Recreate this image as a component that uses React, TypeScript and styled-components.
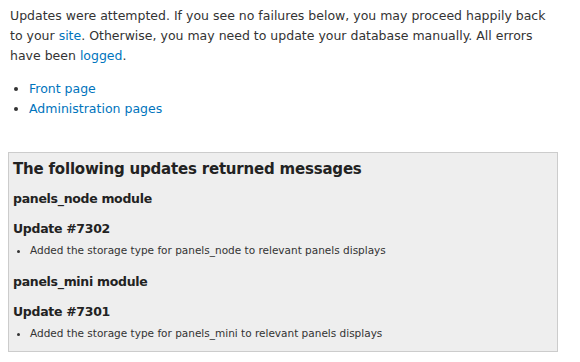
import React from "react";
import styled, { createGlobalStyle } from "styled-components";

const Global = createGlobalStyle`
  html, body { margin: 0; padding: 0; background: #fff; }
  body { font-family: "DejaVu Sans", Verdana, sans-serif; color: #333; }
`;

const Page = styled.div`
  padding: 6px 22px 0 8px;
  width: 580px;
  box-sizing: border-box;
`;

const Intro = styled.p`
  margin: 0 0 13px 2px;
  font-size: 12.5px;
  line-height: 20px;
`;

const Link = styled.a`
  color: #0074bd;
  text-decoration: none;
`;

const Nav = styled.ul`
  margin: 0 0 33px 0;
  padding: 0 0 0 21px;
  font-size: 12.5px;
  line-height: 20px;
  list-style: disc;
`;

const Box = styled.div`
  border: 1px solid #ccc;
  background: #eee;
  padding: 5px 4px 10px 4px;
  height: 200px;
  box-sizing: border-box;
`;

const Title = styled.h2`
  margin: 0;
  font-size: 15px;
  letter-spacing: -0.2px;
  font-weight: bold;
  line-height: 22px;
  padding-bottom: 9px;
  color: #222;
`;

const Module = styled.h3<{ $gap?: number }>`
  margin: 0;
  font-size: 12.5px;
  letter-spacing: -0.3px;
  font-weight: bold;
  line-height: 20px;
  padding-bottom: ${(p) => p.$gap ?? 10}px;
  color: #222;
`;

const Messages = styled.ul`
  margin: 0 0 15px 0;
  padding: 0 0 0 17px;
  font-size: 10.5px;
  line-height: 14px;
  list-style: disc;
`;

export default function App() {
  return (
    <>
      <Global />
      <Page>
        <Intro>
          Updates were attempted. If you see no failures below, you may proceed happily back to your{" "}
          <Link href="#">site</Link>. Otherwise, you may need to update your database manually. All errors have been{" "}
          <Link href="#">logged</Link>.
        </Intro>
        <Nav>
          <li><Link href="#">Front page</Link></li>
          <li><Link href="#">Administration pages</Link></li>
        </Nav>
        <Box>
          <Title>The following updates returned messages</Title>
          <Module>panels_node module</Module>
          <Module $gap={4}>Update #7302</Module>
          <Messages>
            <li>Added the storage type for panels_node to relevant panels displays</li>
          </Messages>
          <Module>panels_mini module</Module>
          <Module $gap={4}>Update #7301</Module>
          <Messages>
            <li>Added the storage type for panels_mini to relevant panels displays</li>
          </Messages>
        </Box>
      </Page>
    </>
  );
}
